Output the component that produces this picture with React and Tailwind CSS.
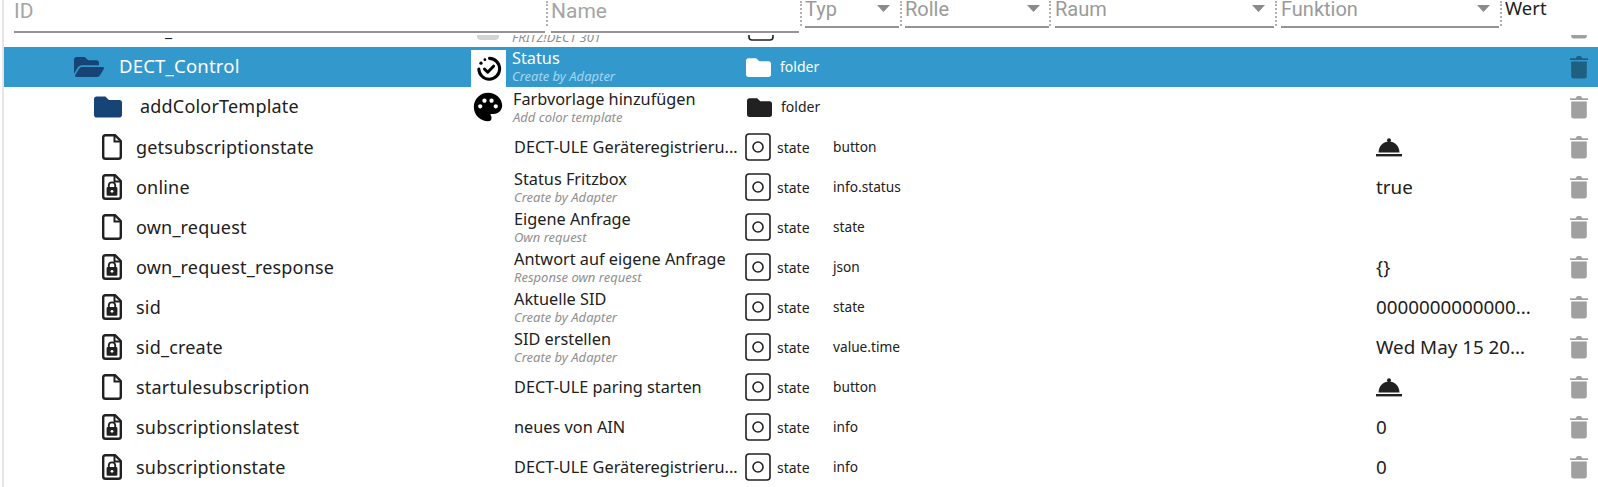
import React from "react";
import { FaFolder, FaFolderOpen } from "react-icons/fa";
import { MdPalette } from "react-icons/md";

const FileIcon = ({ locked }) => (
  <svg width="20" height="26" viewBox="0 0 20 26" className="shrink-0">
    <path d="M3.5 1.2H13L18.8 7V22.5a2.3 2.3 0 0 1-2.3 2.3H3.5a2.3 2.3 0 0 1-2.3-2.3V3.5a2.3 2.3 0 0 1 2.3-2.3Z" fill="none" stroke="#212121" strokeWidth="2.4" strokeLinejoin="round" />
    <path d="M12.5 1.5V7.5H18.5" fill="none" stroke="#212121" strokeWidth="2" />
    {locked && (
      <g>
        <path d="M6.8 13.2v-1.7a3.2 3.2 0 0 1 6.4 0v1.7" fill="none" stroke="#212121" strokeWidth="1.8" />
        <rect x="4.6" y="13" width="10.8" height="8.8" rx="1" fill="#212121" />
        <circle cx="10" cy="17.3" r="1.4" fill="#fff" />
      </g>
    )}
  </svg>
);

const StateIcon = () => (
  <svg width="26" height="28" viewBox="0 0 26 28" className="shrink-0">
    <rect x="1" y="1" width="24" height="26" rx="3" fill="none" stroke="#212121" strokeWidth="1.6" />
    <circle cx="13" cy="14" r="5" fill="none" stroke="#212121" strokeWidth="1.6" />
  </svg>
);

const Trash = ({ color }) => (
  <svg width="18" height="24" viewBox="0 0 18 24" className="shrink-0" style={{ color }}>
    <path d="M0 3.2h18V5H0Z M6 3.2C6 1.8 7 1 8 1h2c1 0 2 .8 2 2.2Z" fill="currentColor" />
    <path d="M1.2 6.5h15.6V21a2.5 2.5 0 0 1-2.5 2.5H3.7A2.5 2.5 0 0 1 1.2 21Z" fill="currentColor" />
  </svg>
);

const Caret = () => (
  <svg width="13" height="7" viewBox="0 0 13 7" className="shrink-0">
    <path d="M0 0h13L6.5 7Z" fill="#8a8a8a" />
  </svg>
);

const Bell = () => (
  <svg width="26" height="19" viewBox="0 0 26 19" className="block">
    <circle cx="13" cy="2.2" r="2" fill="#212121" />
    <path d="M2.5 14.5C2.8 8 7.3 3.6 13 3.6s10.2 4.4 10.5 10.9Z" fill="#212121" />
    <rect x="0" y="16" width="26" height="2.4" fill="#212121" />
  </svg>
);

const StatusIcon = () => (
  <svg width="26" height="26" viewBox="0 0 24 24">
    <path d="M12.5 2.2A9.6 9.6 0 1 1 2.6 12" fill="none" stroke="#000" strokeWidth="2.8" strokeLinecap="round" />
    <circle cx="4.6" cy="6.6" r="1.5" fill="#000" />
    <circle cx="8.2" cy="3.4" r="1.3" fill="#000" />
    <path d="M7.8 12l3 3 5.4-5.6" fill="none" stroke="#000" strokeWidth="2.8" strokeLinecap="round" strokeLinejoin="round" />
  </svg>
);

const Sep = () => <div className="w-0 h-[25px] mt-[1px] border-l-2 border-dotted border-[#b0b0b0] shrink-0" />;

const HeadSelect = ({ label, className }) => (
  <div className={`${className} h-[28px] border-b-2 border-[#949494] flex items-start justify-between pr-[9px] text-[20px] leading-[24px] text-[#9a9a9a] shrink-0`}>
    <span className="-mt-[3px]">{label}</span>
    <span className="mt-[5px]"><Caret /></span>
  </div>
);

const rows = [
  { id: "getsubscriptionstate", name: "DECT-ULE Geräteregistrieru...", role: "button", bell: true },
  { id: "online", lock: true, name: "Status Fritzbox", sub: "Create by Adapter", role: "info.status", value: "true" },
  { id: "own_request", name: "Eigene Anfrage", sub: "Own request", role: "state" },
  { id: "own_request_response", lock: true, name: "Antwort auf eigene Anfrage", sub: "Response own request", role: "json", value: "{}" },
  { id: "sid", lock: true, name: "Aktuelle SID", sub: "Create by Adapter", role: "state", value: "0000000000000..." },
  { id: "sid_create", lock: true, name: "SID erstellen", sub: "Create by Adapter", role: "value.time", value: "Wed May 15 20..." },
  { id: "startulesubscription", name: "DECT-ULE paring starten", role: "button", bell: true },
  { id: "subscriptionslatest", lock: true, name: "neues von AIN", role: "info", value: "0" },
  { id: "subscriptionstate", lock: true, name: "DECT-ULE Geräteregistrieru...", role: "info", value: "0" },
];

const NameCell = ({ name, sub, subClass = "text-[#8f8f8f]" }) => (
  <div className={`flex flex-col justify-center ${sub ? "-mt-[1px]" : ""}`}>
    <div className={`text-[16.3px] leading-[20px] whitespace-nowrap ${sub ? "mb-[1px]" : ""}`}>{name}</div>
    {sub && <div className={`text-[13px] leading-[14px] italic whitespace-nowrap ${subClass}`}>{sub}</div>}
  </div>
);

export default function App() {
  return (
    <div className="w-[1596px] h-[487px] overflow-hidden bg-white flex flex-col border-l-2 border-[#e6e6e6] ml-[2px] text-[#212121] font-['Noto_Sans','Open_Sans',sans-serif]">
      {/* header */}
      <div className="h-[35px] shrink-0 flex items-start font-['Roboto',sans-serif] pl-[10px]">
        <div className="w-[531px] h-[33px] border-b-2 border-[#949494] text-[21px] leading-[22px] text-[#a5a5a5] shrink-0">ID</div>
        <div className="ml-[1px]"><Sep /></div>
        <div className="ml-[3px] w-[248px] h-[33px] border-b-2 border-[#949494] text-[21px] leading-[22px] text-[#a5a5a5] shrink-0">Name</div>
        <div className="ml-[1px]"><Sep /></div>
        <HeadSelect label="Typ" className="w-[94px] ml-[3px]" />
        <div className="ml-[1px]"><Sep /></div>
        <HeadSelect label="Rolle" className="w-[144px] ml-[3px]" />
        <div className="ml-[0px]"><Sep /></div>
        <HeadSelect label="Raum" className="w-[219px] ml-[4px]" />
        <div className="ml-[1px]"><Sep /></div>
        <HeadSelect label="Funktion" className="w-[218px] ml-[4px]" />
        <div className="ml-[1px]"><Sep /></div>
        <div className="ml-[3px] font-['Noto_Sans',sans-serif] text-[18.5px] leading-[20px] -mt-[2px] text-[#212121]">Wert</div>
      </div>

      {/* table body */}
      <div className="flex-1 overflow-hidden">
        {/* scrolled-away row */}
        <div className="h-[40px] -mt-[28px] flex items-center text-[#212121]">
          <div className="w-[466px] pl-[161px] pt-[8px] shrink-0 text-[16px] leading-[24px]">_</div>
          <div className="w-[36px] flex justify-center items-end h-full shrink-0"><div className="w-[22px] h-[5px] mb-[7px] bg-[#d4d4d4] rounded-b-sm" /></div>
          <div className="w-[234px] pl-[6px] flex flex-col shrink-0 justify-end h-full pb-[3px]">
            <div className="text-[13px] leading-[14px] italic text-[#8f8f8f]">FRITZ!DECT 301</div>
          </div>
          <div className="shrink-0 ml-[8px]"><StateIcon /></div>
          <div className="flex-1" />
          <div className="mr-[10px]"><Trash color="#a0a0a0" /></div>
        </div>

        {/* selected row */}
        <div className="h-[40px] bg-[#3399cc] text-white flex items-center">
          <div className="w-[467px] pl-[70px] flex items-center shrink-0">
            <FaFolderOpen className="text-[#164477] shrink-0" size={30} />
            <span className="ml-[15px] -mt-[2px] text-[18.5px] tracking-[0.2px]">DECT_Control</span>
          </div>
          <div className="w-[35px] h-[37px] mt-[3px] bg-white flex items-center justify-center shrink-0">
            <StatusIcon />
          </div>
          <div className="w-[238px] pl-[6px] shrink-0 -mt-[3px]">
            <NameCell name="Status" sub="Create by Adapter" subClass="text-[#a5d5ee]" />
          </div>
          <div className="w-[36px] flex items-center pl-[2px] shrink-0"><FaFolder size={25} color="#fff" /></div>
          <span className="text-[14px] -mt-[2px]">folder</span>
          <div className="flex-1" />
          <div className="mr-[10px]"><Trash color="#1f6082" /></div>
        </div>

        {/* folder row */}
        <div className="h-[40px] flex items-center">
          <div className="w-[467px] pl-[90px] flex items-center shrink-0">
            <FaFolder className="text-[#164477] shrink-0" size={28} />
            <span className="ml-[18px] -mt-[2px] text-[18px] tracking-[0.2px]">addColorTemplate</span>
          </div>
          <div className="w-[34px] flex items-center justify-center shrink-0"><MdPalette size={34} color="#000" /></div>
          <div className="w-[239px] pl-[8px] shrink-0">
            <NameCell name="Farbvorlage hinzufügen" sub="Add color template" />
          </div>
          <div className="w-[36px] flex items-center pl-[3px] shrink-0"><FaFolder size={25} color="#212121" /></div>
          <span className="ml-[1px] -mt-[2px] text-[14px]">folder</span>
          <div className="flex-1" />
          <div className="mr-[10px]"><Trash color="#a0a0a0" /></div>
        </div>

        {rows.map((r) => (
          <div key={r.id} className="h-[40px] flex items-center">
            <div className="w-[466px] pl-[98px] flex items-center shrink-0">
              <FileIcon locked={r.lock} />
              <span className="ml-[14px] text-[18px] tracking-[0.2px] whitespace-nowrap">{r.id}</span>
            </div>
            <div className="w-[36px] shrink-0" />
            <div className="w-[238px] pl-[8px] shrink-0"><NameCell name={r.name} sub={r.sub} /></div>
            <div className="w-[30px] shrink-0 flex items-center pl-[1px]"><StateIcon /></div>
            <div className="w-[59px] shrink-0 text-[14px] pl-[3px]">state</div>
            <div className="w-[543px] shrink-0 text-[13.7px]">{r.role}</div>
            <div className="w-[180px] shrink-0 text-[18.8px] whitespace-nowrap">
              {r.bell ? <Bell /> : r.value}
            </div>
            <div className="flex-1" />
            <div className="mr-[10px]"><Trash color="#a0a0a0" /></div>
          </div>
        ))}
      </div>
    </div>
  );
}
